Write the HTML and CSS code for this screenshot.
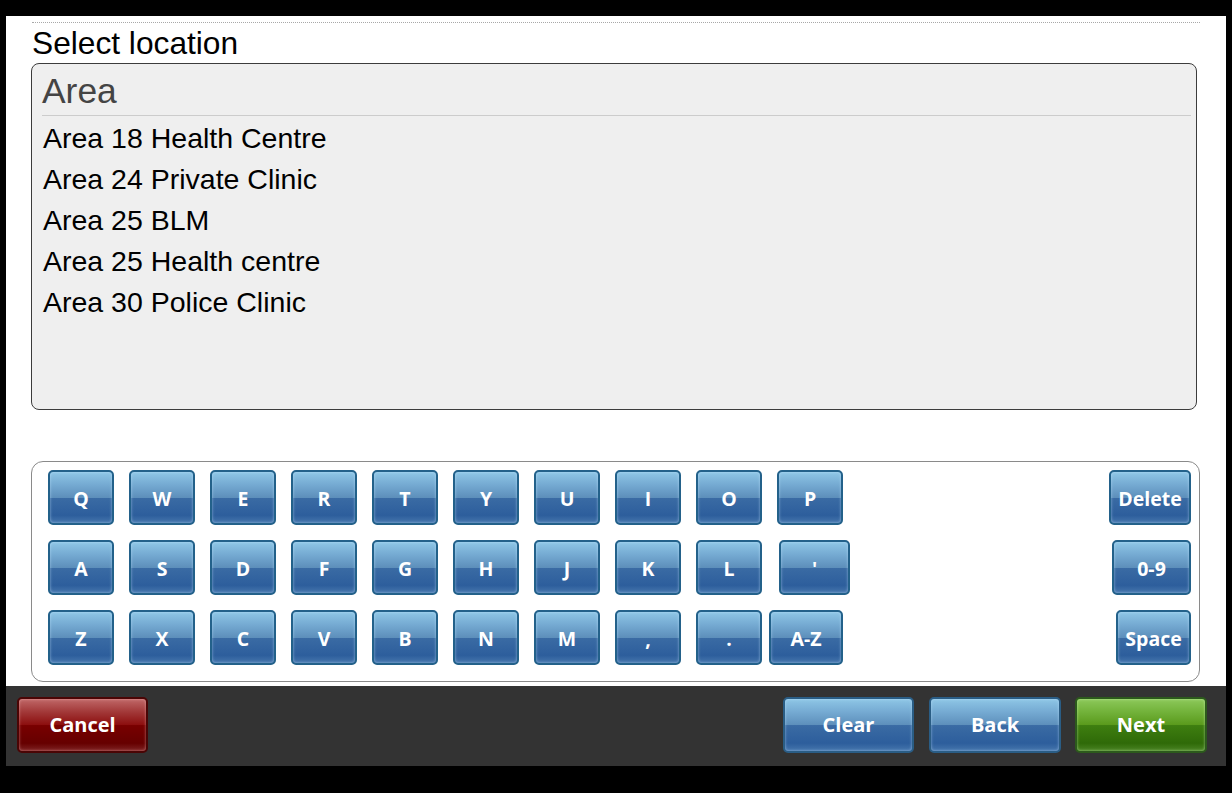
FILE: index.html
```html
<!DOCTYPE html>
<html>
<head>
<meta charset="utf-8">
<title>Select location</title>
<link rel="stylesheet" href="styles.css">
</head>
<body>
<div class="screen">
  <div class="main">
    <div class="dots"></div>
    <div class="title">Select location</div>
    <div class="listbox">
      <div class="list-head">Area</div>
      <ul class="list">
        <li>Area 18 Health Centre</li>
        <li>Area 24 Private Clinic</li>
        <li>Area 25 BLM</li>
        <li>Area 25 Health centre</li>
        <li>Area 30 Police Clinic</li>
      </ul>
    </div>
    <div class="keyboard">
      <div class="rows">
        <div class="row">
          <div class="key">Q</div><div class="key">W</div><div class="key">E</div><div class="key">R</div><div class="key">T</div><div class="key">Y</div><div class="key">U</div><div class="key">I</div><div class="key">O</div><div class="key">P</div>
        </div>
        <div class="row">
          <div class="key">A</div><div class="key">S</div><div class="key">D</div><div class="key">F</div><div class="key">G</div><div class="key">H</div><div class="key">J</div><div class="key">K</div><div class="key">L</div><div class="key key-apos">'</div>
        </div>
        <div class="row">
          <div class="key">Z</div><div class="key">X</div><div class="key">C</div><div class="key">V</div><div class="key">B</div><div class="key">N</div><div class="key">M</div><div class="key">,</div><div class="key">.</div><div class="key key-az">A-Z</div>
        </div>
      </div>
      <div class="side">
        <div class="key key-delete">Delete</div>
        <div class="key key-num">0-9</div>
        <div class="key key-space">Space</div>
      </div>
    </div>
  </div>
  <div class="bar">
    <div class="btn btn-red">Cancel</div>
    <div class="bar-right">
      <div class="btn btn-blue">Clear</div>
      <div class="btn btn-blue btn-back">Back</div>
      <div class="btn btn-green">Next</div>
    </div>
  </div>
</div>
</body>
</html>
```
FILE: styles.css
```css
html, body {
  margin: 0;
  padding: 0;
  background: #000;
}
body {
  width: 1232px;
  height: 793px;
  overflow: hidden;
}
.screen {
  margin: 16px 0 0 6px;
  width: 1220px;
}
.main {
  background: #fff;
  height: 670px;
  padding: 6px 0 0 25px;
  box-sizing: border-box;
}
.dots {
  margin-left: 1px;
  width: 1168px;
  border-top: 1px dotted #a8a8a8;
}
.title {
  font-family: "Liberation Sans", Arial, sans-serif;
  font-size: 31.7px;
  line-height: 40px;
  height: 40px;
  color: #000;
  padding-left: 1px;
}
.listbox {
  width: 1166px;
  height: 347px;
  box-sizing: border-box;
  border: 1px solid #3c3c3c;
  border-radius: 8px;
  background: #efefef;
  font-family: "Liberation Sans", Arial, sans-serif;
}
.list-head {
  margin: 0 5px 0 10px;
  padding-top: 3px;
  height: 48px;
  line-height: 48px;
  font-size: 35.4px;
  color: #444;
  border-bottom: 1px solid #cccccc;
}
.list {
  list-style: none;
  margin: 2px 0 0 0;
  padding: 0 0 0 11px;
}
.list li {
  font-size: 28.5px;
  line-height: 41px;
  color: #000;
}
.keyboard {
  margin-top: 51px;
  width: 1169px;
  height: 221px;
  box-sizing: border-box;
  border: 1px solid #8a8a8a;
  border-radius: 12px;
  background: #fff;
  display: flex;
  justify-content: space-between;
  padding: 8px 8px 0 16px;
}
.rows {
  display: flex;
  flex-direction: column;
  gap: 15px;
}
.row {
  display: flex;
  gap: 15px;
}
.side {
  display: flex;
  flex-direction: column;
  align-items: flex-end;
  gap: 15px;
}
.key {
  width: 66px;
  height: 55px;
  box-sizing: border-box;
  border: 2px solid #23618a;
  border-radius: 5px;
  background:
    linear-gradient(to bottom, #8ec6e6 0%, #75aad2 25%, #5d8fbb 50%, #3a6ba4 51%, #2d5e9c 85%, #4676ad 100%);
  box-shadow: inset 0 0 3px rgba(200, 230, 255, 0.6);
  color: #fff;
  font-family: "Open Sans", "DejaVu Sans", sans-serif;
  font-weight: 700;
  font-size: 19.5px;
  display: flex;
  align-items: center;
  justify-content: center;
  padding-top: 1px;
}
.key-apos {
  width: 71px;
  margin-left: 2px;
}
.key-az {
  width: 74px;
  margin-left: -8px;
}
.key-delete {
  width: 82px;
}
.key-num {
  width: 79px;
}
.key-space {
  width: 75px;
}
.bar {
  background: #333;
  height: 80px;
  display: flex;
  justify-content: space-between;
  align-items: flex-start;
  padding: 11px 19px 0 11px;
  box-sizing: border-box;
}
.bar-right {
  display: flex;
  gap: 15px;
}
.btn {
  width: 131px;
  height: 56px;
  box-sizing: border-box;
  border-radius: 5px;
  color: #fff;
  font-family: "Open Sans", "DejaVu Sans", sans-serif;
  font-weight: 700;
  font-size: 20px;
  display: flex;
  align-items: center;
  justify-content: center;
  padding-bottom: 2px;
}
.btn-blue {
  border: 2px solid #2a5d85;
  background:
    linear-gradient(to bottom, #8ec6e6 0%, #75aad2 25%, #5d8fbb 50%, #3a6ba4 51%, #2d5e9c 85%, #4676ad 100%);
  box-shadow: inset 0 0 3px rgba(200, 230, 255, 0.6);
}
.btn-back {
  width: 132px;
  margin-right: -1px;
}
.btn-red {
  border: 2px solid #4a0505;
  background:
    linear-gradient(to bottom, #c06868 0%, #a23838 25%, #8c0e0e 50%, #780000 51%, #660000 85%, #7e2222 100%);
  box-shadow: inset 0 0 3px rgba(255, 200, 200, 0.6);
}
.btn-green {
  width: 132px;
  border: 2px solid #2c5a1c;
  background:
    linear-gradient(to bottom, #8cc85a 0%, #72b23a 25%, #5a9a1c 50%, #3e7e10 51%, #2f6a08 85%, #4a8424 100%);
  box-shadow: inset 0 0 3px rgba(220, 255, 200, 0.6);
}
```
